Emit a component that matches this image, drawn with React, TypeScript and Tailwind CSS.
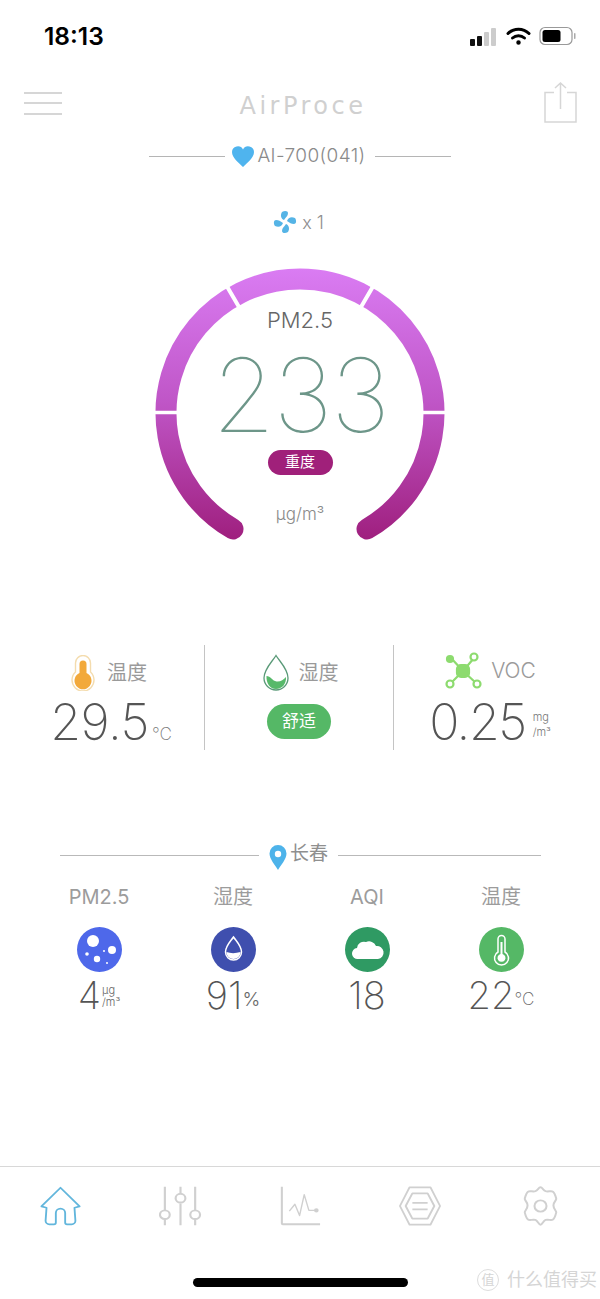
import React from "react";

const sans = `font-['Inter','Noto_Sans_CJK_SC',sans-serif]`;

function Thermo() {
  return (
    <svg width="24" height="36" viewBox="0 0 24 36">
      <path d="M4.500 17V8a7.500 7.500 0 0 1 15 0v9a11 11 0 1 1-15 0Z" fill="#fff" stroke="#f4dcae" strokeWidth="1.400" />
      <path d="M8.500 18V9a3.500 3.500 0 0 1 7 0v9a8.500 8.500 0 1 1-7 0Z" fill="#f2a93b" />
    </svg>
  );
}
function Drop() {
  return (
    <svg width="28" height="38" viewBox="0 0 28 38">
      <path d="M14 1.500C10 8 2 15 2 24a12 12 0 0 0 24 0C26 15 18 8 14 1.500Z" fill="#fff" stroke="#5a9a78" strokeWidth="1.300" />
      <path d="M4.500 22c4 0 6 5 10 5.500 4 .5 7-2 9.500-4.500C24.500 30 20 35 14 35 8 35 4 29 4.500 22Z" fill="#57b96a" />
    </svg>
  );
}
function Voc() {
  return (
    <svg width="38" height="38" viewBox="0 0 38 38" fill="none" stroke="#8ddb6f" strokeWidth="2.200">
      <path d="M19 19 7 6M19 19 30 6M19 19 7 31M19 19 32 31" />
      <rect x="13" y="13" width="12" height="12" rx="4" fill="#8ddb6f" />
      <circle cx="6" cy="7" r="3" fill="#8ddb6f" />
      <circle cx="30" cy="5" r="3.500" fill="#fff" />
      <circle cx="6" cy="32" r="3.500" fill="#fff" />
      <circle cx="33" cy="32" r="3.500" fill="#fff" />
    </svg>
  );
}
function Fan() {
  return (
    <svg width="24" height="24" viewBox="0 0 24 24" fill="#55b4e6">
      <path d="M11 10C8 9 7 5 9 2c3-2 6-1 6 1 0 3-2 4-4 7Z" />
      <path d="M14 11c1-3 4-5 8-3 2 3 1 6-1 6-3 0-4-1-7-3Z" />
      <path d="M13 14c3 1 4 5 2 8-3 2-6 1-6-1 0-3 2-4 4-7Z" />
      <path d="M10 13c-1 3-4 5-8 3-2-3-1-6 1-6 3 0 4 1 7 3Z" />
    </svg>
  );
}
function Pin() {
  return (
    <svg width="18" height="25" viewBox="0 0 18 25">
      <path d="M9 0a8.500 8.500 0 0 0-8.500 8.500C.5 14 6 20 9 25c3-5 8.500-11 8.500-16.500A8.500 8.500 0 0 0 9 0Z" fill="#4db3ea" />
      <circle cx="9" cy="9" r="3.200" fill="#fff" />
    </svg>
  );
}
function Gauge() {
  return (
    <svg width="300" height="290" viewBox="0 0 300 290" className="block">
      <defs>
        <linearGradient id="g" gradientUnits="userSpaceOnUse" x1="0" y1="0" x2="0" y2="272">
          <stop offset="0" stopColor="#da7cf3" />
          <stop offset="0.5" stopColor="#bf55c6" />
          <stop offset="1" stopColor="#9f1f7e" />
        </linearGradient>
      </defs>
      <path d="M83 261A134 134 0 1 1 217 261" fill="none" stroke="url(#g)" strokeWidth="21" strokeLinecap="round" />
      <path d="M0 144.500H32M268 144.500H300" stroke="#fff" strokeWidth="3.500" />
      <path d="M75 15 L89 39M225 15 L211 39" stroke="#fff" strokeWidth="4" />
    </svg>
  );
}

function Stat({ children }: { children: React.ReactNode }) {
  return <div className="flex flex-col items-center">{children}</div>;
}

function Weather({ label, icon, value, unit }: { label: string; icon: React.ReactNode; value: string; unit: React.ReactNode }) {
  return (
    <div className="flex flex-col items-center w-[134px]">
      <div className="h-[26px] flex items-center text-[20px] text-[#9c9c9c] leading-none">{label}</div>
      <div className="mt-[17px]">{icon}</div>
      <div className="mt-[1px] h-[44px] flex items-center font-[150] text-[38px] text-[#555] leading-none">
        {value}
        {unit}
      </div>
    </div>
  );
}

export default function App() {
  return (
    <div className={`w-[600px] h-[1299px] bg-white flex flex-col overflow-hidden ${sans}`}>
      {/* status bar */}
      <div className="h-[72px] shrink-0 flex items-start justify-between pl-[44px] pr-[23px] pt-[22px]">
        <span className="text-[24.500px] leading-[29px] font-semibold text-black font-['Inter',sans-serif]">18:13</span>
        <div className="flex items-center gap-[8px] pt-[4px] pl-[2px]">
          <svg width="28" height="20" viewBox="0 0 28 20">
            <rect x="0" y="13" width="5" height="7" rx="1" fill="#111" />
            <rect x="7" y="10" width="5" height="10" rx="1" fill="#111" />
            <rect x="14" y="6" width="5" height="14" rx="1" fill="#ccc" />
            <rect x="21" y="2" width="5" height="18" rx="1" fill="#ccc" />
          </svg>
          <svg width="25" height="19" viewBox="0 0 25 19" fill="none" stroke="#000" strokeWidth="3" strokeLinecap="round">
            <path d="M2 6.500a15 15 0 0 1 21 0" />
            <path d="M6.500 11a9 9 0 0 1 12 0" />
            <circle cx="12.500" cy="15.500" r="1.500" fill="#000" strokeWidth="1.500" />
          </svg>
          <svg width="38" height="20" viewBox="0 0 38 20">
            <rect x="1" y="1.500" width="32" height="17" rx="5" fill="none" stroke="#999" strokeWidth="1.200" />
            <rect x="3.500" y="4" width="18" height="12" rx="2.500" fill="#000" />
            <rect x="35" y="7" width="1.500" height="6" rx="0.700" fill="#aaa" />
          </svg>
        </div>
      </div>

      {/* nav */}
      <div className="h-[56px] shrink-0 flex items-center justify-between pl-[24px] pr-[23px]">
        <div className="flex flex-col gap-[8.500px] w-[38px] mt-[6px]">
          <div className="h-[2px] bg-[#d6d6d6]" />
          <div className="h-[2px] bg-[#d6d6d6]" />
          <div className="h-[2px] bg-[#d6d6d6]" />
        </div>
        <span className="mt-[12px] text-[24px] leading-[30px] font-normal text-[#d0d0d0] tracking-[3.500px] font-['DejaVu_Sans',sans-serif]">AirProce</span>
        <svg width="33" height="41" viewBox="0 0 33 41" fill="none" stroke="#d6d6d6" strokeWidth="1.500" className="mt-[4px]">
          <path d="M10 10.500H1V40H32V10.500H23" />
          <path d="M16.500 27V1M11 6l5.500-5L22 6" />
        </svg>
      </div>

      {/* device */}
      <div className="mt-[6px] h-[44px] shrink-0 flex items-center justify-center">
        <div className="w-[76px] h-px bg-[#b5b5b5]" />
        <svg width="22" height="21" viewBox="0 0 22 21" className="ml-[7px]">
          <path d="M11 21C7 17 0 12 0 6a5.800 5.800 0 0 1 11-2.500A5.800 5.800 0 0 1 22 6c0 6-7 11-11 15Z" fill="#4fb4ee" />
        </svg>
        <span className="ml-[3px] mt-[1px] text-[19px] text-[#8a8a8a] tracking-[0.4px] font-light">AI-700(041)</span>
        <div className="ml-[9px] w-[76px] h-px bg-[#b5b5b5]" />
      </div>

      {/* fan */}
      <div className="mt-[22px] h-[44px] shrink-0 flex items-center justify-center gap-[5px] pr-[3px]">
        <Fan />
        <span className="text-[18px] font-light text-[#8e8e8e]">x 1</span>
      </div>

      {/* gauge */}
      <div className="mt-[24px] self-center relative w-[300px] h-[290px] shrink-0">
        <Gauge />
        <div className="absolute inset-0 flex flex-col items-center">
          <span className="mt-[36px] text-[22px] leading-[32px] font-light text-[#666]">PM2.5</span>
          <span className="mt-[14px] text-[102px] leading-[90px] font-[140] text-[#6d9689] tracking-[-2px]">233</span>
          <span className="mt-[10px] w-[65px] h-[25px] rounded-full bg-[#a0207a] text-white text-[15px] flex items-center justify-center">重度</span>
          <span className="mt-[26px] text-[17px] leading-[26px] font-light text-[#8a8a8a]">μg/m³</span>
        </div>
      </div>

      {/* stats */}
      <div className="mt-[87px] h-[104px] shrink-0 grid grid-cols-[205px_189px_206px]">
        <div className="border-r border-[#c4c4c4] pl-[18px]">
          <Stat>
            <div className="flex items-center gap-[12px] h-[40px] mt-[8px] -ml-[4px]">
              <Thermo />
              <span className="text-[20px] text-[#9a9a9a]">温度</span>
            </div>
            <div className="flex items-baseline mt-[1px]">
              <span className="text-[50px] leading-[56px] font-[150] text-[#555] tracking-[-0.5px]">29.5</span>
              <span className="ml-[3px] text-[17px] font-extralight text-[#777]">℃</span>
            </div>
          </Stat>
        </div>
        <div className="border-r border-[#c4c4c4]">
          <Stat>
            <div className="flex items-center gap-[9px] h-[40px] mt-[8px] pl-[2px]">
              <Drop />
              <span className="text-[20px] text-[#9a9a9a]">湿度</span>
            </div>
            <div className="mt-[11px] w-[64px] h-[35px] rounded-full bg-[#55b866] text-white text-[17px] flex items-center justify-center">舒适</div>
          </Stat>
        </div>
        <div className="pr-[14px]">
          <Stat>
            <div className="flex items-center gap-[9px] h-[40px] mt-[6px] pb-[1px]">
              <Voc />
              <span className="text-[21px] font-light text-[#9a9a9a]">VOC</span>
            </div>
            <div className="flex items-center mt-[3px]">
              <span className="text-[50px] leading-[56px] font-[150] text-[#555] tracking-[-1.5px]">0.25</span>
              <span className="ml-[7px] flex flex-col text-[11px] leading-[15px] font-light text-[#777] pt-[6px]">
                <span>mg</span>
                <span>/m³</span>
              </span>
            </div>
          </Stat>
        </div>
      </div>

      {/* location */}
      <div className="mt-[93px] h-[26px] shrink-0 flex items-center pl-[60px] pr-[59px]">
        <div className="flex-1 h-px bg-[#b9b9b9]" />
        <div className="ml-[10px] mt-[4px]"><Pin /></div>
        <span className="ml-[3px] text-[19px] text-[#8f8f8f] -mt-[2px]">长春</span>
        <div className="ml-[10px] w-[203px] h-px bg-[#b9b9b9]" />
      </div>

      {/* weather */}
      <div className="mt-[16px] shrink-0 flex pl-[32px]">
        <Weather
          label="PM2.5"
          icon={
            <svg width="45" height="45" viewBox="0 0 45 45">
              <circle cx="22.500" cy="22.500" r="22.500" fill="#4e68ea" />
              <circle cx="16" cy="14" r="6" fill="#fff" />
              <circle cx="35" cy="23" r="4" fill="#fff" />
              <circle cx="20" cy="32" r="3.200" fill="#fff" />
              <circle cx="10" cy="27" r="1.800" fill="#fff" />
              <circle cx="27" cy="24" r="1" fill="#fff" />
              <circle cx="30" cy="36" r="1" fill="#fff" />
            </svg>
          }
          value="4"
          unit={
            <span className="ml-[1px] flex flex-col text-[11px] leading-[12px] font-light text-[#666] pt-[2px]">
              <span>μg</span>
              <span>/m³</span>
            </span>
          }
        />
        <Weather
          label="湿度"
          icon={
            <svg width="45" height="45" viewBox="0 0 45 45">
              <circle cx="22.500" cy="22.500" r="22.500" fill="#3f4fae" />
              <path d="M22.500 10c-3 4.500-8 9-8 15a8 8 0 0 0 16 0c0-6-5-10.500-8-15Z" fill="none" stroke="#fff" strokeWidth="1.500" />
              <path d="M15.500 25c4 1.500 9 1.500 14 0 0 4-3 7-7 7s-7-3-7-7Z" fill="#fff" />
            </svg>
          }
          value="91"
          unit={<span className="text-[19px] font-light text-[#666] pt-[8px]">%</span>}
        />
        <Weather
          label="AQI"
          icon={
            <svg width="45" height="45" viewBox="0 0 45 45">
              <circle cx="22.500" cy="22.500" r="22.500" fill="#2f9a63" />
              <path d="M13 32a5.500 5.500 0 0 1-1-11 7 7 0 0 1 9-6 7.500 7.500 0 0 1 10 4 6.500 6.500 0 0 1 2 13H13Z" fill="#fff" />
            </svg>
          }
          value="18"
          unit={null}
        />
        <Weather
          label="温度"
          icon={
            <svg width="45" height="45" viewBox="0 0 45 45">
              <circle cx="22.500" cy="22.500" r="22.500" fill="#55b866" />
              <path d="M19 25V12a3.500 3.500 0 0 1 7 0v13a7 7 0 1 1-7 0Z" fill="none" stroke="#fff" strokeWidth="1.500" />
              <path d="M21.500 27V15h2v12a4 4 0 1 1-2 0Z" fill="#fff" />
            </svg>
          }
          value="22"
          unit={<span className="text-[17px] font-extralight text-[#666] pt-[8px]">℃</span>}
        />
      </div>

      {/* tab bar */}
      <div className="mt-auto h-[133px] shrink-0 border-t border-[#d8d8d8] flex flex-col">
        <div className="grid grid-cols-5 pt-[19px] h-[97px] justify-items-center">
          <svg width="41" height="40" viewBox="0 0 44 46" preserveAspectRatio="none" fill="none" stroke="#62b6dc" strokeWidth="2" strokeLinejoin="round">
            <path d="M22 2 1.500 23.500 7 25 6 40a4 4 0 0 0 4 4h5a2 2 0 0 0 2-2V31a5 5 0 0 1 10 0v11a2 2 0 0 0 2 2h5a4 4 0 0 0 4-4l-1-15 5.500-1.500Z" />
          </svg>
          <svg width="43" height="40" viewBox="0 0 44 46" preserveAspectRatio="none" fill="none" stroke="#d0d0d0" strokeWidth="2.200">
            <path d="M6 1v27M6 38v7M22 1v7M22 20v25M37 1v27M37 38v7" />
            <circle cx="6" cy="33" r="5" />
            <circle cx="22" cy="14" r="5" />
            <circle cx="37" cy="33" r="5" />
          </svg>
          <svg width="41" height="40" viewBox="0 0 44 46" preserveAspectRatio="none" fill="none" stroke="#d0d0d0" strokeWidth="2">
            <path d="M2 1v42a1 1 0 0 0 1 1h40" strokeWidth="2.200" />
            <path d="M10 29l6-8 5 13 5-24 5 18 9 0" strokeWidth="1.500" strokeLinejoin="round" />
            <circle cx="39" cy="28" r="1.500" fill="#d0d0d0" />
          </svg>
          <svg width="42" height="40" viewBox="0 0 44 46" preserveAspectRatio="none" fill="none" stroke="#d0d0d0" strokeWidth="2" strokeLinejoin="round">
            <path d="M11 1.500h22L43 23 33 44.500H11L1 23Z" />
            <path d="M14 8.500h16L37 23l-7 14.500H14L7 23Z" />
            <path d="M14 19.500h16M14 27h16" />
          </svg>
          <svg width="37" height="40" viewBox="0 0 40 46" preserveAspectRatio="none" fill="none" stroke="#d0d0d0" strokeWidth="2.200" strokeLinejoin="round">
            <path d="M20 1.500c2 0 3 3.500 5.500 4.500 3 1 6-1 8 .5 2 1.500 3 6 3.500 8 .5 2-3 3.500-3 8s3.500 6 3 8c-.5 2-1.500 6.500-3.500 8-2 1.500-5-.5-8 .5-2.500 1-3.500 5.500-5.500 5.500s-3-4.500-5.500-5.500c-3-1-6 1-8-.5-2-1.500-3-6-3.500-8-.5-2 3-3.500 3-8s-3.500-6-3-8C3.500 12.500 4.500 8 6.500 6.500c2-1.500 5 .5 8-.5C17 5 18 1.500 20 1.500Z" />
            <circle cx="20" cy="23" r="6.500" />
          </svg>
        </div>
        <div className="relative h-[35px] flex justify-center">
          <div className="mt-[14px] w-[215px] h-[9px] rounded-full bg-black" />
          <div className="absolute right-[3px] top-[4px] flex items-center gap-[8px] text-[#d5d5d5]">
            <span className="w-[22px] h-[22px] rounded-full border border-[#ddd] text-[13px] flex items-center justify-center">值</span>
            <span className="text-[18px] leading-[24px]">什么值得买</span>
          </div>
        </div>
      </div>
    </div>
  );
}
